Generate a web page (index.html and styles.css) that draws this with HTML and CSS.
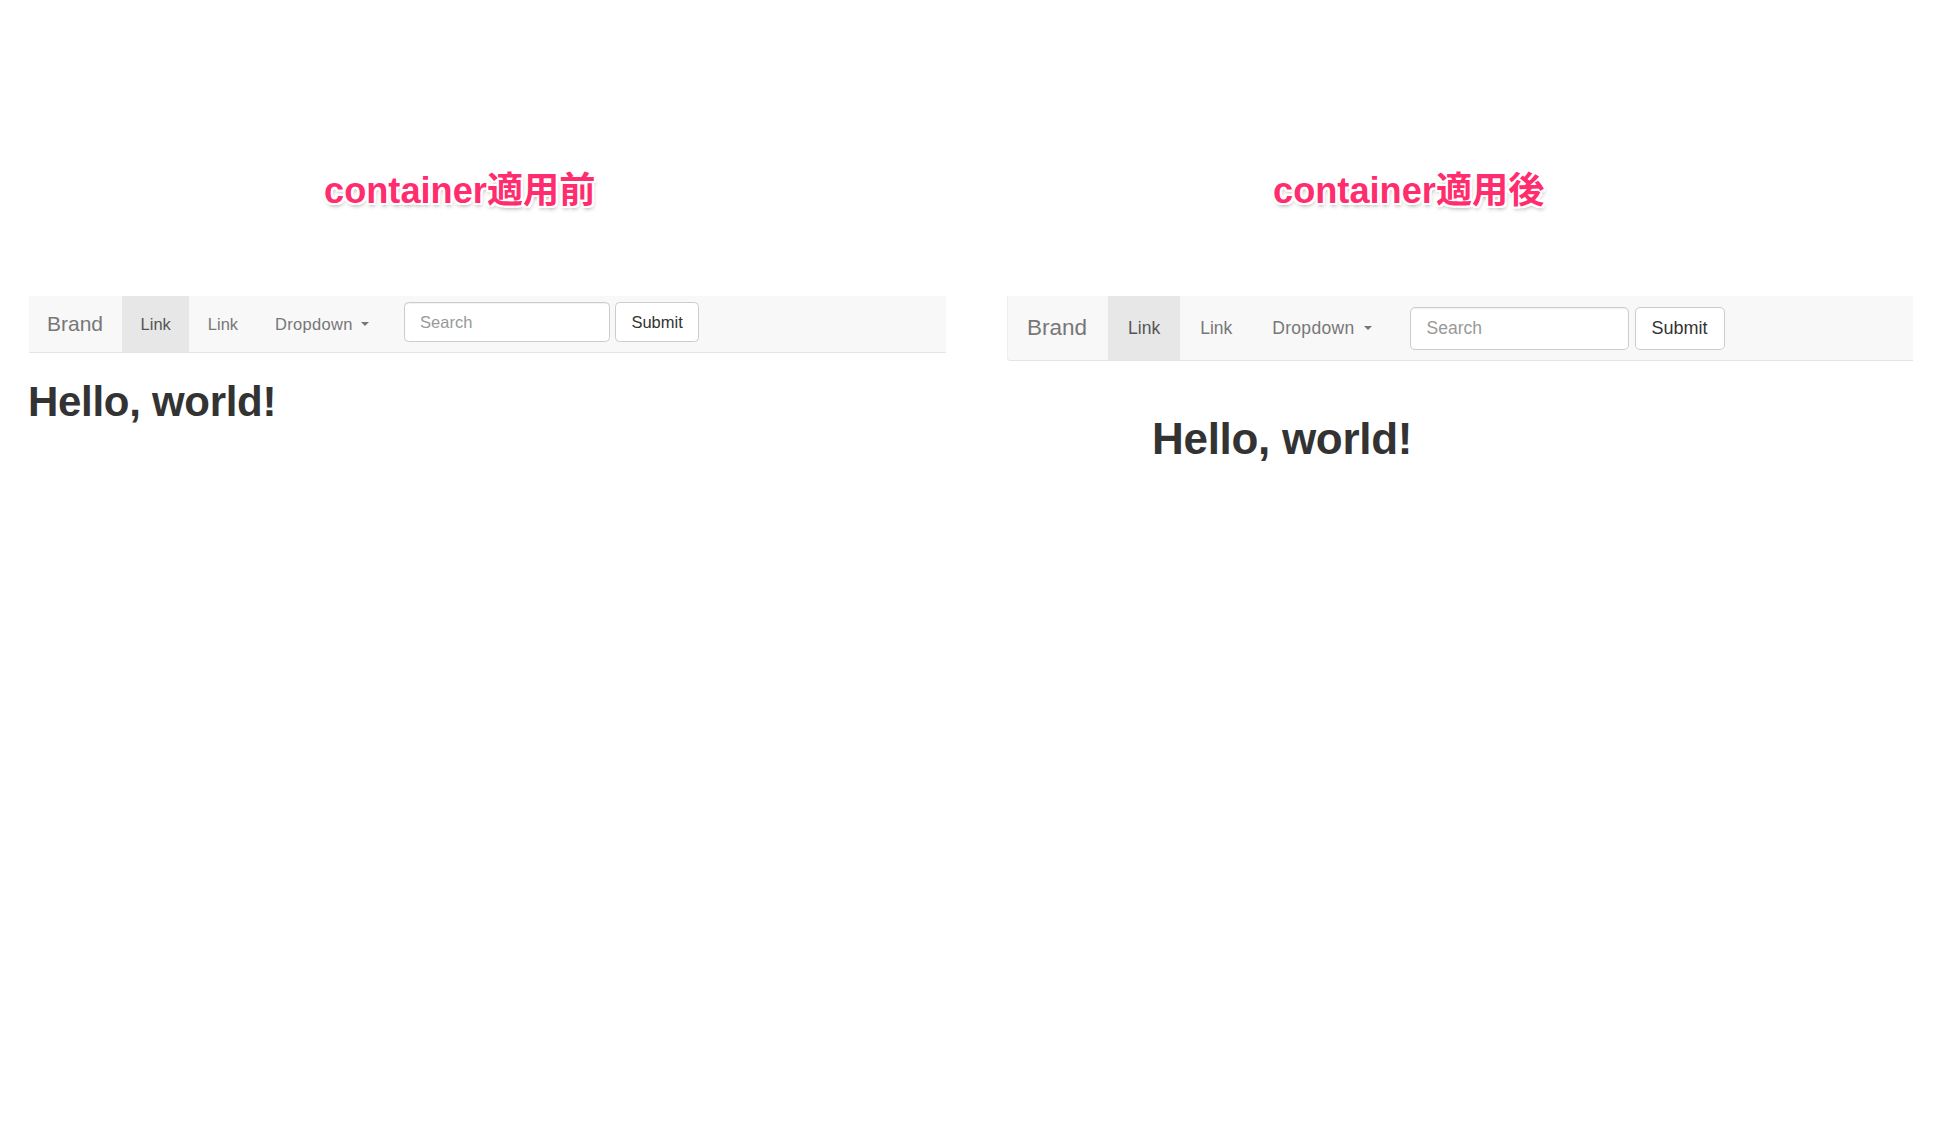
FILE: index.html
```html
<!DOCTYPE html>
<html lang="ja">
<head>
<meta charset="utf-8">
<title>container</title>
<link rel="stylesheet" href="styles.css">
</head>
<body>
<div class="page">
  <section class="panel before">
    <h2 class="title">container適用前</h2>
    <nav class="navbar">
      <a class="brand">Brand</a>
      <ul class="nav">
        <li class="active"><a>Link</a></li>
        <li><a>Link</a></li>
        <li class="dropdown"><a>Dropdown <span class="caret"></span></a></li>
      </ul>
      <form class="nav-form">
        <input class="search" type="text" placeholder="Search">
        <button class="submit" type="button">Submit</button>
      </form>
    </nav>
    <h1 class="hello">Hello, world!</h1>
  </section>
  <section class="panel after">
    <h2 class="title">container適用後</h2>
    <nav class="navbar">
      <a class="brand">Brand</a>
      <ul class="nav">
        <li class="active"><a>Link</a></li>
        <li><a>Link</a></li>
        <li class="dropdown"><a>Dropdown <span class="caret"></span></a></li>
      </ul>
      <form class="nav-form">
        <input class="search" type="text" placeholder="Search">
        <button class="submit" type="button">Submit</button>
      </form>
    </nav>
    <h1 class="hello">Hello, world!</h1>
  </section>
</div>
</body>
</html>
```
FILE: styles.css
```css
* { box-sizing: border-box; }
html, body { margin: 0; padding: 0; background: #fff; }
body { font-family: "Liberation Sans", Arial, sans-serif; color: #333; }

.page {
  display: flex;
  align-items: flex-start;
  padding-top: 171px;
}

.panel { flex: none; }
.before { width: 917px; margin-left: 29px; }
.after { width: 905px; margin-left: 62px; }

.title {
  margin: 0 0 85px;
  height: 40px;
  line-height: 40px;
  font-size: 36.2px;
  font-weight: bold;
  font-family: "Liberation Sans", "Noto Sans CJK JP", sans-serif;
  color: #ff2d6e;
  white-space: nowrap;
  text-shadow:
    -2px -2px 0 #fff, 2px -2px 0 #fff, -2px 2px 0 #fff, 2px 2px 0 #fff,
    0 -2px 0 #fff, 0 2px 0 #fff, -2px 0 0 #fff, 2px 0 0 #fff,
    1px 3px 4px rgba(0, 0, 0, 0.35);
}
.before .title { padding-left: 295px; }
.after .title { padding-left: 265px; }

.navbar {
  display: flex;
  align-items: stretch;
  background: #f8f8f8;
  border-bottom: 1px solid #e4e4e4;
}
.before .navbar { height: 57px; }
.after .navbar {
  height: 65px;
  border-radius: 0 0 0 3px;
  box-shadow: -1px 0 0 #eeeeee;
}

.brand {
  display: flex;
  align-items: center;
  color: #777;
}
.before .brand { font-size: 21px; padding: 0 19px 0 18px; }
.after .brand { font-size: 22.5px; padding: 0 21px 0 19px; }

.nav {
  display: flex;
  list-style: none;
  margin: 0;
  padding: 0;
}
.nav li { display: flex; }
.nav a {
  display: flex;
  align-items: center;
  color: #777;
  white-space: pre;
}
.nav .active a { background: #e7e7e7; color: #555; }
.before .nav a { font-size: 16.5px; padding: 0 18.5px; }
.after .nav a { font-size: 17.5px; padding: 0 20px; }
.before .dropdown a { letter-spacing: 0.3px; }
.after .dropdown a { letter-spacing: 0.3px; }

.caret {
  display: inline-block;
  width: 0;
  height: 0;
  border-left-style: solid;
  border-right-style: solid;
  border-top-style: solid;
  border-left-color: transparent;
  border-right-color: transparent;
  border-top-color: #777;
  vertical-align: middle;
}
.before .caret { margin-left: 3px; border-top-width: 4px; border-left-width: 4px; border-right-width: 4px; }
.after .caret { margin-left: 4px; border-top-width: 4.5px; border-left-width: 4.5px; border-right-width: 4.5px; }

.nav-form { display: flex; align-items: flex-start; }
.before .nav-form { margin-left: 17px; padding-top: 6px; }
.after .nav-form { margin-left: 18px; padding-top: 11px; }

.search {
  font-family: "Liberation Sans", Arial, sans-serif;
  border: 1px solid #ccc;
  background: #fff;
  color: #555;
  box-shadow: inset 0 1px 1px rgba(0, 0, 0, 0.06);
  outline: none;
}
.search::placeholder { color: #999; }
.before .search { width: 206px; height: 40px; font-size: 16.5px; padding: 0 15px; border-radius: 4.5px; }
.after .search { width: 219px; height: 43px; font-size: 17.5px; padding: 0 16px; border-radius: 5px; }

.submit {
  font-family: "Liberation Sans", Arial, sans-serif;
  background: #fff;
  color: #333;
  border: 1px solid #ccc;
  padding: 0;
}
.before .submit { width: 84px; height: 40px; font-size: 16.5px; margin-left: 5px; border-radius: 4.5px; }
.after .submit { width: 90px; height: 43px; font-size: 18px; margin-left: 6px; border-radius: 5px; }

.hello {
  margin: 0;
  font-weight: bold;
  color: #333;
  line-height: 1.1;
  white-space: nowrap;
}
.before .hello { font-size: 42px; letter-spacing: -0.3px; margin-top: 26px; margin-left: -1px; }
.after .hello { font-size: 44px; letter-spacing: -0.3px; margin-top: 54px; padding-left: 144px; }
```
